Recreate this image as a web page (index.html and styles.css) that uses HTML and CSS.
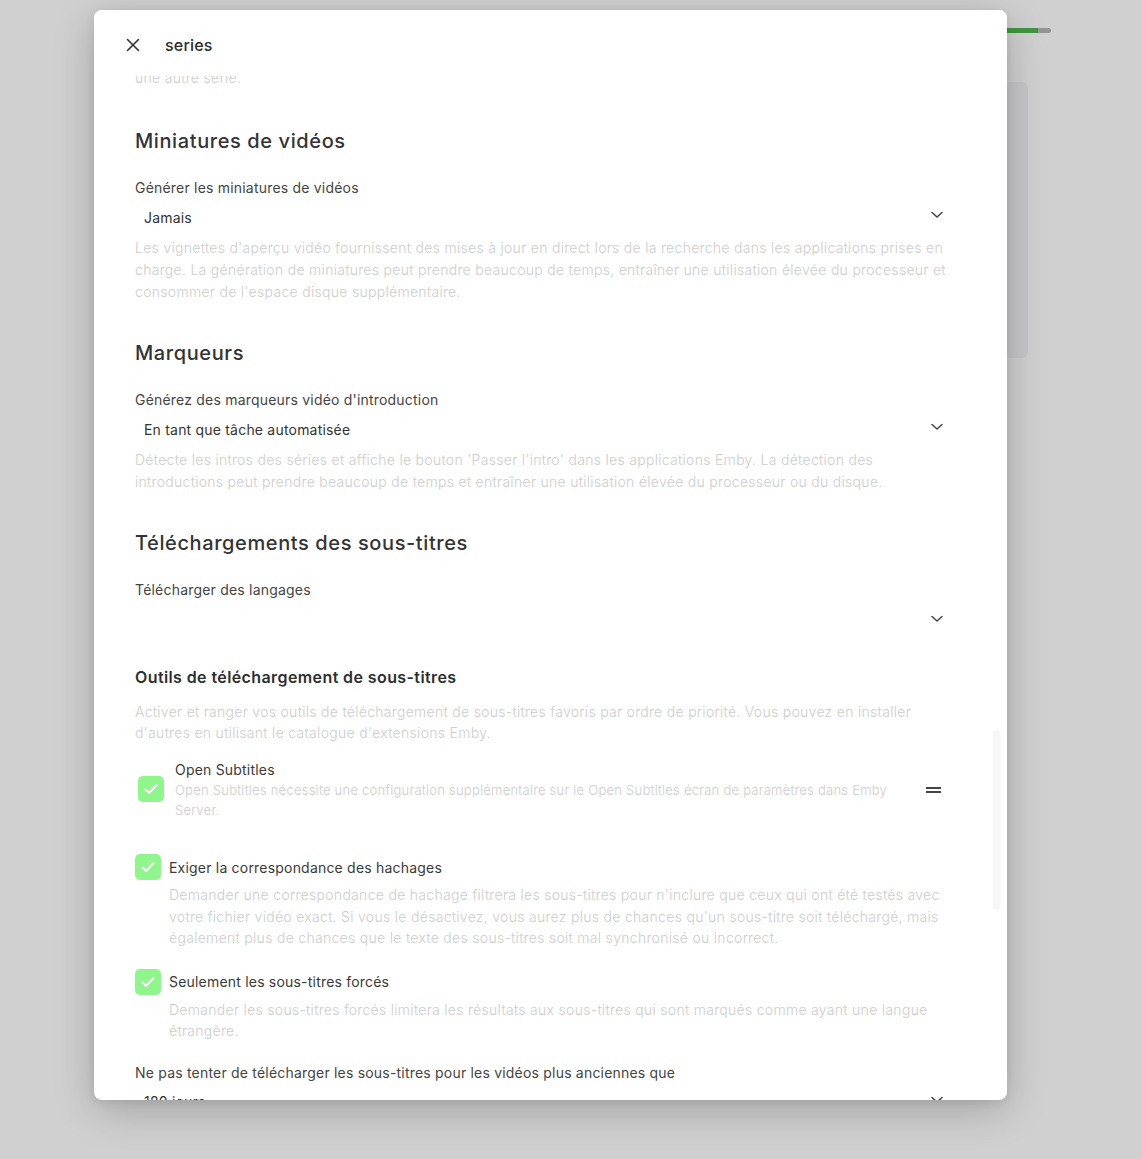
FILE: index.html
```html
<!DOCTYPE html>
<html lang="fr">
<head>
<meta charset="utf-8">
<title>series</title>
<link rel="stylesheet" href="styles.css">
</head>
<body>
<div class="backdrop">
  <div class="progress"><div class="progress-fill"></div></div>
  <div class="bg-panel"></div>
</div>

<div class="dialog">
  <header class="dlg-header">
    <button class="close-btn" aria-label="Fermer">
      <svg width="16" height="16" viewBox="0 0 16 16"><path d="M2.5 2.5 L13.5 13.5 M13.5 2.5 L2.5 13.5" stroke="#333" stroke-width="1.6" fill="none" stroke-linecap="round"/></svg>
    </button>
    <div class="dlg-title">series</div>
  </header>

  <div class="dlg-body">
    <div class="content">
      <p class="desc partial">une autre série.</p>

      <h2 class="sec-title">Miniatures de vidéos</h2>
      <div class="field-label">Générer les miniatures de vidéos</div>
      <div class="select"><span>Jamais</span><svg class="chev" width="12" height="8" viewBox="0 0 12 8"><path d="M1 1.5 L6 6 L11 1.5" stroke="#444" stroke-width="1.5" fill="none" stroke-linecap="round" stroke-linejoin="round"/></svg></div>
      <p class="desc after-select">Les vignettes d'aperçu vidéo fournissent des mises à jour en direct lors de la recherche dans les applications prises en charge. La génération de miniatures peut prendre beaucoup de temps, entraîner une utilisation élevée du processeur et consommer de l'espace disque supplémentaire.</p>

      <h2 class="sec-title">Marqueurs</h2>
      <div class="field-label">Générez des marqueurs vidéo d'introduction</div>
      <div class="select"><span>En tant que tâche automatisée</span><svg class="chev" width="12" height="8" viewBox="0 0 12 8"><path d="M1 1.5 L6 6 L11 1.5" stroke="#444" stroke-width="1.5" fill="none" stroke-linecap="round" stroke-linejoin="round"/></svg></div>
      <p class="desc after-select">Détecte les intros des séries et affiche le bouton 'Passer l'intro' dans les applications Emby. La détection des introductions peut prendre beaucoup de temps et entraîner une utilisation élevée du processeur ou du disque.</p>

      <h2 class="sec-title">Téléchargements des sous-titres</h2>
      <div class="field-label">Télécharger des langages</div>
      <div class="select select-short"><span></span><svg class="chev" width="12" height="8" viewBox="0 0 12 8"><path d="M1 1.5 L6 6 L11 1.5" stroke="#444" stroke-width="1.5" fill="none" stroke-linecap="round" stroke-linejoin="round"/></svg></div>

      <h3 class="sub-title">Outils de téléchargement de sous-titres</h3>
      <p class="desc desc-tight">Activer et ranger vos outils de téléchargement de sous-titres favoris par ordre de priorité. Vous pouvez en installer d'autres en utilisant le catalogue d'extensions Emby.</p>

      <div class="plugin-item">
        <span class="checkbox"><svg width="18" height="18" viewBox="0 0 18 18"><path d="M3.5 9.5 L7.2 13 L14.5 5" stroke="#fff" stroke-width="2.2" fill="none" stroke-linecap="round" stroke-linejoin="round"/></svg></span>
        <div class="plugin-text">
          <div class="plugin-name">Open Subtitles</div>
          <div class="plugin-desc">Open Subtitles nécessite une configuration supplémentaire sur le Open Subtitles écran de paramètres dans Emby Server.</div>
        </div>
        <span class="drag-handle"></span>
      </div>

      <div class="check-field first">
        <div class="check-row">
          <span class="checkbox"><svg width="18" height="18" viewBox="0 0 18 18"><path d="M3.5 9.5 L7.2 13 L14.5 5" stroke="#fff" stroke-width="2.2" fill="none" stroke-linecap="round" stroke-linejoin="round"/></svg></span>
          <span class="check-label">Exiger la correspondance des hachages</span>
        </div>
        <p class="desc check-desc">Demander une correspondance de hachage filtrera les sous-titres pour n'inclure que ceux qui ont été testés avec votre fichier vidéo exact. Si vous le désactivez, vous aurez plus de chances qu'un sous-titre soit téléchargé, mais également plus de chances que le texte des sous-titres soit mal synchronisé ou incorrect.</p>
      </div>

      <div class="check-field">
        <div class="check-row">
          <span class="checkbox"><svg width="18" height="18" viewBox="0 0 18 18"><path d="M3.5 9.5 L7.2 13 L14.5 5" stroke="#fff" stroke-width="2.2" fill="none" stroke-linecap="round" stroke-linejoin="round"/></svg></span>
          <span class="check-label">Seulement les sous-titres forcés</span>
        </div>
        <p class="desc check-desc">Demander les sous-titres forcés limitera les résultats aux sous-titres qui sont marqués comme ayant une langue étrangère.</p>
      </div>

      <div class="field-label last-label">Ne pas tenter de télécharger les sous-titres pour les vidéos plus anciennes que</div>
      <div class="select"><span>180 jours</span><svg class="chev" width="12" height="8" viewBox="0 0 12 8"><path d="M1 1.5 L6 6 L11 1.5" stroke="#444" stroke-width="1.5" fill="none" stroke-linecap="round" stroke-linejoin="round"/></svg></div>
    </div>
    <div class="scroll-thumb"></div>
  </div>
</div>
</body>
</html>
```

FILE: styles.css
```css
html, body {
  margin: 0;
  padding: 0;
  width: 1142px;
  height: 1159px;
  overflow: hidden;
  background: #d0d0d0;
  font-family: Inter, "Noto Sans", "Liberation Sans", sans-serif;
  color: #333;
}

.backdrop {
  position: relative;
  width: 1142px;
  height: 1159px;
}

.progress {
  position: absolute;
  left: 960px;
  top: 28px;
  width: 91px;
  height: 5px;
  border-radius: 3px;
  background: #959595;
  overflow: hidden;
}
.progress-fill {
  width: 78px;
  height: 100%;
  background: #3f963f;
}

.bg-panel {
  position: absolute;
  left: 900px;
  top: 82px;
  width: 128px;
  height: 276px;
  border-radius: 6px;
  background: #c7c7c9;
}

.dialog {
  position: absolute;
  left: 94px;
  top: 10px;
  width: 913px;
  height: 1090px;
  background: #fff;
  border-radius: 8px;
  box-shadow: 0 10px 40px rgba(0, 0, 0, 0.22), 0 2px 8px rgba(0, 0, 0, 0.08);
  display: flex;
  flex-direction: column;
  overflow: hidden;
}

.dlg-header {
  height: 66px;
  box-sizing: border-box;
  padding: 4px 0 0 27px;
  flex: none;
  display: flex;
  align-items: center;
  background: #fff;
  position: relative;
  z-index: 2;
}
.close-btn {
  width: 24px;
  height: 24px;
  padding: 0;
  border: 0;
  background: none;
  display: flex;
  align-items: center;
  justify-content: center;
}
.dlg-title {
  margin-left: 20px;
  font-size: 16px;
  font-weight: 500;
  color: #2b2b2b;
  letter-spacing: 0.2px;
}

.dlg-body {
  flex: 1;
  overflow: hidden;
  position: relative;
}
.content {
  padding: 0 62px 0 41px;
  margin-top: -9px;
}

.desc {
  margin: 0 -5px 0 0;
  font-size: 14px;
  line-height: 22px;
  font-weight: 300;
  color: #cdcdcd;
  letter-spacing: 0.3px;
}
.desc.partial {
  height: 22px;
}
.desc.after-select {
  margin-top: 2px;
}

.sec-title {
  margin: 0;
  margin-top: 36px;
  font-size: 20px;
  line-height: 28px;
  font-weight: 500;
  color: #333;
  letter-spacing: 0.6px;
}
.desc.partial + .sec-title {
  margin-top: 38px;
}

.field-label {
  margin-top: 23px;
  font-size: 14px;
  line-height: 20px;
  font-weight: 400;
  color: #444;
  letter-spacing: 0.2px;
}

.select {
  margin-top: 1px;
  height: 36px;
  display: flex;
  align-items: center;
  justify-content: space-between;
  padding: 0 2px 0 9px;
  font-size: 14px;
  color: #333;
  letter-spacing: 0.2px;
}
.select .chev {
  margin-top: -4px;
}
.select-short {
  height: 40px;
}

.sub-title {
  margin: 24px 0 0;
  font-size: 16px;
  line-height: 24px;
  font-weight: 600;
  color: #2e2e2e;
  letter-spacing: 0.4px;
}
.desc-tight {
  margin-top: 12px;
  line-height: 21px;
}

.plugin-item {
  margin-top: 17px;
  display: flex;
  align-items: flex-start;
  padding-left: 3px;
}
.plugin-item .checkbox {
  margin-top: 16px;
}
.plugin-text {
  margin-left: 11px;
  flex: 1;
  padding-right: 30px;
}
.plugin-name {
  font-size: 14px;
  line-height: 20px;
  color: #3a3a3a;
  letter-spacing: 0.2px;
}
.plugin-desc {
  font-size: 13px;
  line-height: 20px;
  font-weight: 300;
  color: #cdcdcd;
  letter-spacing: 0.25px;
}
.drag-handle {
  width: 15px;
  height: 6px;
  margin-top: 27px;
  margin-right: 4px;
  border-top: 2px solid #444;
  border-bottom: 2px solid #444;
  box-sizing: border-box;
  flex: none;
}

.checkbox {
  width: 26px;
  height: 26px;
  border-radius: 5px;
  background: #8ef68a;
  display: flex;
  align-items: center;
  justify-content: center;
  flex: none;
}

.check-field {
  margin-top: 20px;
}
.check-field.first {
  margin-top: 34px;
}
.check-row {
  display: flex;
  align-items: center;
  height: 26px;
}
.check-label {
  margin-left: 8px;
  font-size: 14px;
  color: #3a3a3a;
  letter-spacing: 0.2px;
}
.check-desc {
  margin-top: 4px;
  margin-left: 34px;
  line-height: 21.5px;
}

.field-label.last-label {
  margin-top: 21px;
}

.scroll-thumb {
  position: absolute;
  right: 6px;
  top: 654px;
  width: 8px;
  height: 180px;
  border-radius: 4px;
  background: #f7f7f7;
}
```
